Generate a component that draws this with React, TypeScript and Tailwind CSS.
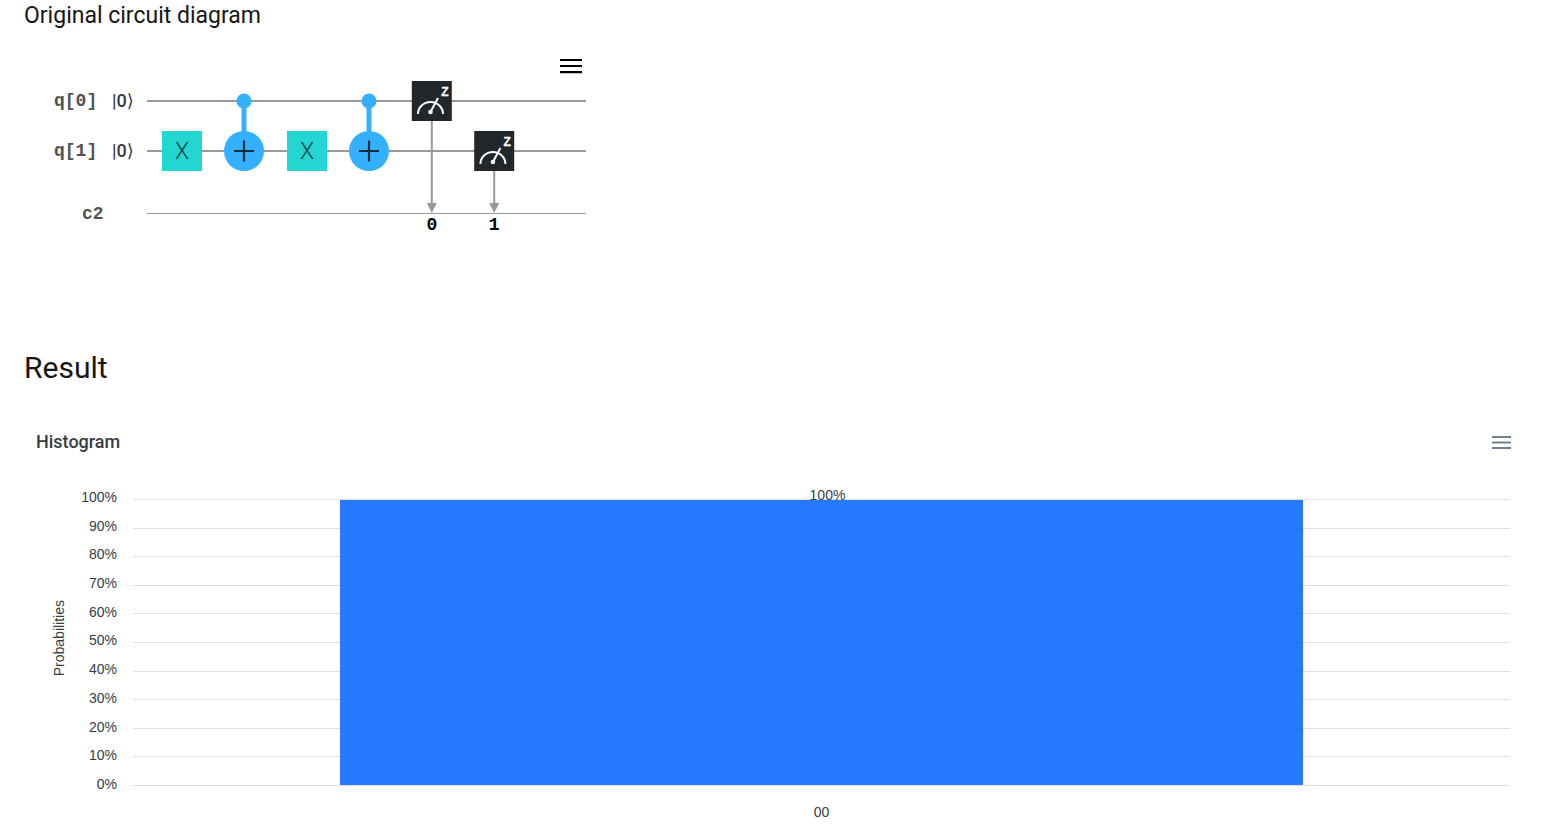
import React from "react";

const SANS = "font-['Roboto','Noto_Sans',sans-serif]";
const TICKS = [100, 90, 80, 70, 60, 50, 40, 30, 20, 10, 0];
const BARS = [{ state: "00", probability: 100 }];

function QubitLabel({ name, y }: { name: string; y: number }) {
  return (
    <>
      <text x="30" y={y + 5} fontSize="18" fill="#525252" className="font-['Liberation_Mono',monospace] font-bold">
        {name}
      </text>
      <text
        x="88"
        y={y + 6}
        fontSize="18"
        fill="#393939"
        className="font-['Roboto','DejaVu_Sans',sans-serif] font-medium"
      >
        |0⟩
      </text>
    </>
  );
}

function XGate({ x, y }: { x: number; y: number }) {
  return (
    <g>
      <rect x={x - 20} y={y - 20} width="40" height="40" fill="#24d6d2" />
      <text
        x={x}
        y={y + 8}
        fontSize="23"
        textAnchor="middle"
        fill="#0b3f45"
        className="font-['Roboto',sans-serif] font-light"
      >
        X
      </text>
    </g>
  );
}

function CNot({ x, control, target }: { x: number; control: number; target: number }) {
  return (
    <g>
      <path d={`M${x} ${control}V${target}`} stroke="#33b1ff" strokeWidth="5" />
      <circle cx={x} cy={control} r="7.5" fill="#33b1ff" />
      <circle cx={x} cy={target} r="20" fill="#33b1ff" />
      <path d={`M${x - 10} ${target}h20M${x} ${target - 10.5}v21`} stroke="#0f2a3d" strokeWidth="2.2" />
    </g>
  );
}

function Measure({ x, y, bit }: { x: number; y: number; bit: string }) {
  return (
    <g>
      <path d={`M${x} ${y}V128`} stroke="#999" strokeWidth="2" />
      <path d={`M${x - 5} 125h10l-5 10z`} fill="#999" />
      <rect x={x - 20} y={y - 20} width="40" height="40" fill="#21272a" />
      <g transform={`translate(${x - 20} ${y - 20})`} stroke="#fff" fill="none">
        <path d="M6.2 33a12.5 12 0 0 1 25 0" strokeWidth="2" />
        <path d="M18.7 31L26.2 17" strokeWidth="2" />
        <circle cx="18.7" cy="31" r="2.3" fill="#fff" stroke="none" />
      </g>
      <text
        x={x + 13}
        y={y - 5}
        fontSize="12"
        textAnchor="middle"
        fill="#fff"
        stroke="#fff"
        strokeWidth="0.3"
        className="font-['Liberation_Sans',sans-serif] font-bold"
      >
        Z
      </text>
      <text
        x={x}
        y="152"
        fontSize="18"
        textAnchor="middle"
        fill="#000"
        className="font-['Liberation_Mono',monospace] font-bold"
      >
        {bit}
      </text>
    </g>
  );
}

function Circuit() {
  return (
    <svg width="562" height="160" viewBox="0 0 562 160" role="img" aria-label="Circuit">
      <path d="M123 23H562M123 73H562" stroke="#999" strokeWidth="2" />
      <path d="M123 135.5H562" stroke="#999" strokeWidth="1.2" />
      <QubitLabel name="q[0]" y={23} />
      <QubitLabel name="q[1]" y={73} />
      <text x="58" y="141" fontSize="18" fill="#525252" className="font-['Liberation_Mono',monospace] font-bold">
        c2
      </text>
      <XGate x={158} y={73} />
      <CNot x={220} control={23} target={73} />
      <XGate x={283} y={73} />
      <CNot x={345} control={23} target={73} />
      <Measure x={407.8} y={23} bit="0" />
      <Measure x={470.2} y={73} bit="1" />
    </svg>
  );
}

function Histogram() {
  return (
    <div className="font-['Liberation_Sans',Arial,sans-serif] text-sm leading-4 text-[#373d3f]">
      <div className="flex h-6 items-center justify-between pl-3">
        <h3 className={`${SANS} text-lg leading-6 font-medium`}>Histogram</h3>
        <button type="button" aria-label="Chart menu" className="-mr-1 block h-6 w-6 cursor-pointer">
          <svg width="24" height="24" viewBox="0 0 24 24">
            <path d="M2 7.1h19M2 12.6h19M2 18h19" stroke="#6e8192" strokeWidth="2" />
          </svg>
        </button>
      </div>
      <div className="mt-[35px] flex">
        <div className="flex w-[69px] items-center justify-center pb-8">
          <span className="rotate-180 [writing-mode:vertical-rl]">Probabilities</span>
        </div>
        <ul className="flex h-[303px] w-6 flex-col items-end justify-between whitespace-nowrap">
          {TICKS.map((t) => (
            <li key={t} className="h-4">
              {t}%
            </li>
          ))}
        </ul>
        <div className="ml-4 flex-1 pt-[10px]">
          <div className="grid h-[287px]">
            <div className="col-start-1 row-start-1 flex flex-col justify-between">
              {TICKS.map((t) => (
                <div key={t} className="h-px bg-[#e0e0e0]" />
              ))}
            </div>
            <div className="col-start-1 row-start-1 flex items-end pt-px pb-px">
              {BARS.map((b) => (
                <div key={b.state} className="flex h-full flex-1 items-end justify-center">
                  <div
                    className="relative w-[70%] bg-[#0f6bff]/90"
                    style={{ height: `${b.probability}%` }}
                  >
                    <span className="absolute inset-x-0 -top-[13px] pl-3 text-center">{b.probability}%</span>
                  </div>
                </div>
              ))}
            </div>
          </div>
          <div className="mt-[18px] flex">
            {BARS.map((b) => (
              <span key={b.state} className="flex-1 text-center">
                {b.state}
              </span>
            ))}
          </div>
        </div>
      </div>
    </div>
  );
}

export default function App() {
  return (
    <main className="bg-white pr-10 pl-6 text-[#161616]">
      <section>
        <h2 className={`${SANS} pt-0.5 text-[23px] leading-7`}>Original circuit diagram</h2>
        <div className="mt-6 flex w-[562px] flex-col">
          <button type="button" aria-label="Circuit menu" className="mr-[3px] h-6 w-6 cursor-pointer self-end">
            <svg width="24" height="24" viewBox="0 0 24 24">
              <path d="M1 6h22M1 12h22M1 18.2h22" stroke="#000" strokeWidth="2.2" />
            </svg>
          </button>
          <Circuit />
        </div>
      </section>
      <section className="mt-28">
        <h2 className={`${SANS} text-[30px] leading-9`}>Result</h2>
        <div className="mt-11">
          <Histogram />
        </div>
      </section>
    </main>
  );
}
